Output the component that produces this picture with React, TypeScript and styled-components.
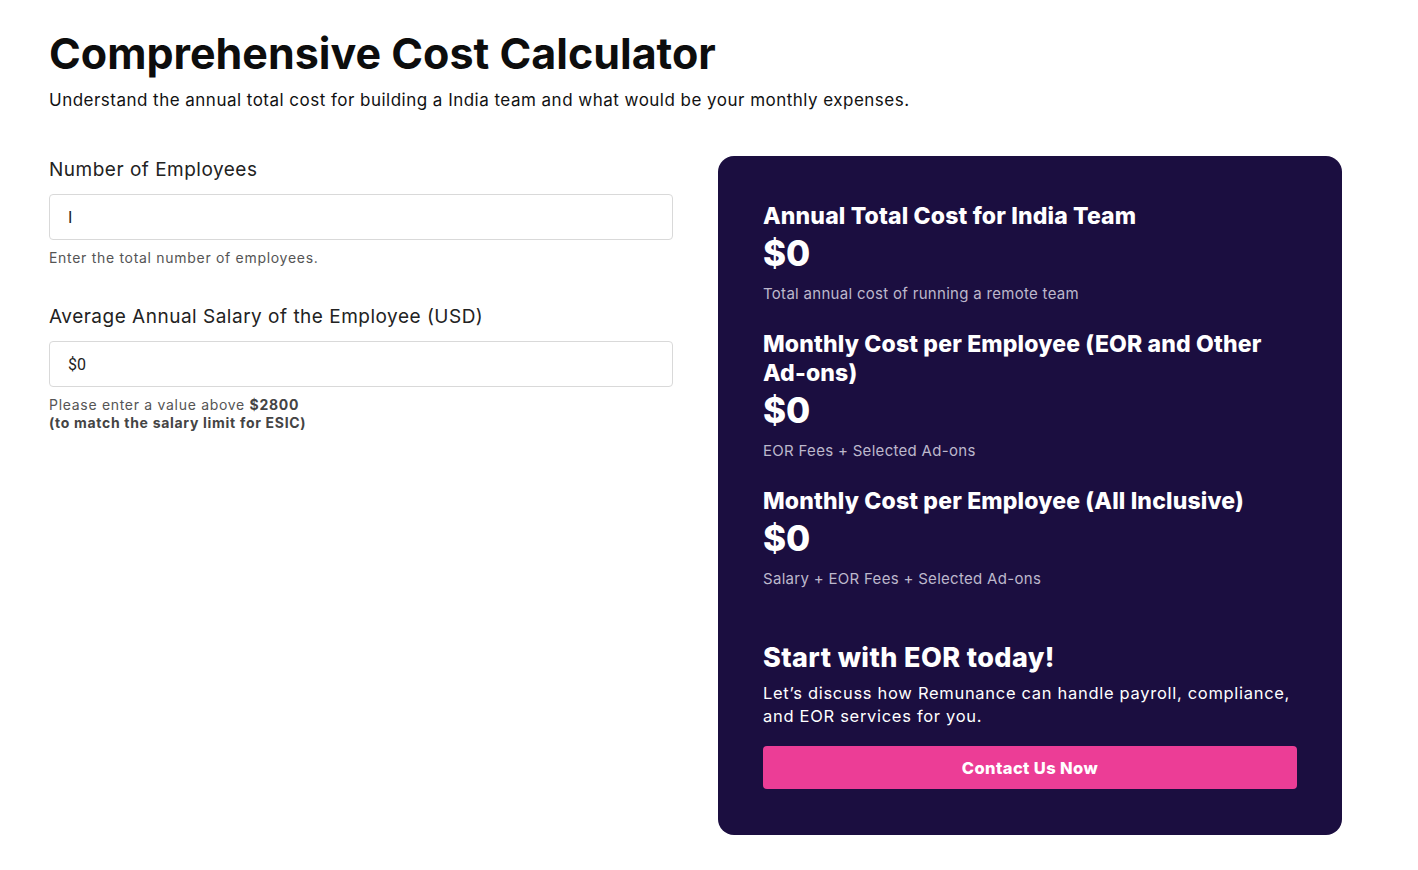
import styled, { createGlobalStyle } from "styled-components";

const GlobalStyle = createGlobalStyle`
  body {
    margin: 0;
    background: #ffffff;
    font-family: "Inter", "Noto Sans", sans-serif;
    color: #111111;
  }
`;

const Page = styled.div`
  padding: 28px 49px 0 49px;
  width: 1293px;
`;

const Title = styled.h1`
  margin: 0;
  font-size: 43px;
  font-weight: 700;
  letter-spacing: 0px;
  line-height: 50px;
  color: #0d0d0d;
`;

const Subtitle = styled.p`
  margin: 10px 0 0 0;
  font-size: 17px;
  line-height: 24px;
  letter-spacing: 0.48px;
  color: #111111;
`;

const Columns = styled.div`
  display: grid;
  grid-template-columns: 624px 624px;
  column-gap: 45px;
  margin-top: 44px;
  align-items: start;
`;

const Form = styled.div`
  display: flex;
  flex-direction: column;
`;

const Field = styled.div`
  display: flex;
  flex-direction: column;
  margin-bottom: 36px;
`;

const Label = styled.label`
  font-size: 19px;
  line-height: 28px;
  letter-spacing: 0.5px;
  color: #222222;
  margin-bottom: 10px;
`;

const Input = styled.input`
  box-sizing: border-box;
  width: 100%;
  height: 46px;
  padding: 0 18px;
  border: 1px solid #d9d9d9;
  border-radius: 4px;
  font-family: "Roboto", "Liberation Sans", sans-serif;
  font-size: 16px;
  color: #222222;
  outline: none;
`;

const Help = styled.div`
  margin-top: 9px;
  font-size: 14px;
  line-height: 18px;
  letter-spacing: 0.7px;
  color: #555555;

  b {
    font-weight: 700;
    color: #444444;
  }
`;

const Card = styled.div`
  background: #1b0e40;
  border-radius: 16px;
  padding: 46px 45px 46px 45px;
  color: #ffffff;
  display: flex;
  flex-direction: column;
`;

const Metric = styled.div<{ last?: boolean }>`
  display: flex;
  flex-direction: column;
  margin-bottom: ${(props) => (props.last ? "51px" : "25px")};
`;

const MetricTitle = styled.h3`
  margin: 0;
  font-size: 23px;
  font-weight: 800;
  letter-spacing: 0.15px;
  line-height: 29px;
  color: #ffffff;
`;

const NoWrap = styled.span`
  white-space: nowrap;
`;

const Amount = styled.div`
  font-size: 35px;
  font-weight: 800;
  line-height: 44px;
`;

const Note = styled.div`
  margin-top: 8px;
  font-size: 15px;
  line-height: 22px;
  color: #bdb8cc;
  letter-spacing: 0.3px;
`;

const CtaTitle = styled.h2`
  margin: 0;
  font-size: 27px;
  font-weight: 800;
  letter-spacing: 0.4px;
  line-height: 34px;
`;

const CtaText = styled.p`
  margin: 7px 0 0 0;
  font-size: 16.5px;
  line-height: 23px;
  color: #ffffff;
  letter-spacing: 0.7px;
`;

const Button = styled.button`
  margin-top: 18px;
  height: 43px;
  width: 100%;
  border: none;
  border-radius: 4px;
  background: #ec3d96;
  color: #ffffff;
  font-family: "Inter", sans-serif;
  font-size: 16.5px;
  font-weight: 800;
  letter-spacing: 0.4px;
  cursor: pointer;
`;

export default function App() {
  return (
    <>
      <GlobalStyle />
      <Page>
        <Title>Comprehensive Cost Calculator</Title>
        <Subtitle>
          Understand the annual total cost for building a India team and what
          would be your monthly expenses.
        </Subtitle>
        <Columns>
          <Form>
            <Field>
              <Label>Number of Employees</Label>
              <Input defaultValue="I" />
              <Help>Enter the total number of employees.</Help>
            </Field>
            <Field>
              <Label>Average Annual Salary of the Employee (USD)</Label>
              <Input defaultValue="$0" />
              <Help>
                Please enter a value above <b>$2800</b>
                <br />
                <b>(to match the salary limit for ESIC)</b>
              </Help>
            </Field>
          </Form>
          <Card>
            <Metric>
              <MetricTitle>Annual Total Cost for India Team</MetricTitle>
              <Amount>$0</Amount>
              <Note>Total annual cost of running a remote team</Note>
            </Metric>
            <Metric>
              <MetricTitle>
                Monthly Cost per Employee (EOR and Other <NoWrap>Ad-ons)</NoWrap>
              </MetricTitle>
              <Amount>$0</Amount>
              <Note>EOR Fees + Selected Ad-ons</Note>
            </Metric>
            <Metric last>
              <MetricTitle>Monthly Cost per Employee (All Inclusive)</MetricTitle>
              <Amount>$0</Amount>
              <Note>Salary + EOR Fees + Selected Ad-ons</Note>
            </Metric>
            <CtaTitle>Start with EOR today!</CtaTitle>
            <CtaText>
              Let’s discuss how Remunance can handle payroll, compliance, and
              EOR services for you.
            </CtaText>
            <Button>Contact Us Now</Button>
          </Card>
        </Columns>
      </Page>
    </>
  );
}
